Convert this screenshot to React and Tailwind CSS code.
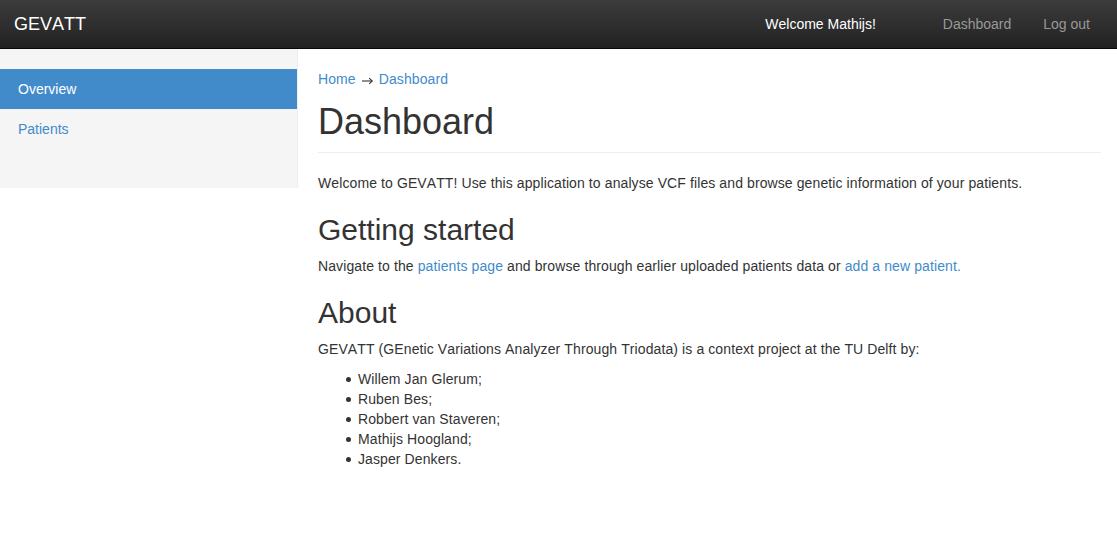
import React from "react";

const members = [
  "Willem Jan Glerum;",
  "Ruben Bes;",
  "Robbert van Staveren;",
  "Mathijs Hoogland;",
  "Jasper Denkers.",
];

function Navbar() {
  return (
    <div className="flex h-[49px] items-center justify-between border-b border-[#080808] bg-gradient-to-b from-[#3c3c3c] to-[#222] pl-[14px] pr-[12px]">
      <a href="#" className="text-[18px] leading-[20px] text-white">
        GEVATT
      </a>
      <div className="flex items-center text-[14px] leading-[20px]">
        <span className="mr-[52px] text-white">Welcome Mathijs!</span>
        <a href="#" className="pl-[15px] pr-[17px] text-[#999]">
          Dashboard
        </a>
        <a href="#" className="px-[15px] text-[#999]">
          Log out
        </a>
      </div>
    </div>
  );
}

function Sidebar() {
  return (
    <div className="w-[298px] shrink-0 self-start border-r border-[#eee] bg-[#f5f5f5] pt-[20px] pb-[39px]">
      <a href="#" className="block bg-[#428bca] px-[18px] py-[10px] text-white">
        Overview
      </a>
      <a href="#" className="block px-[18px] py-[10px] text-[#428bca]">
        Patients
      </a>
    </div>
  );
}

function Arrow() {
  return (
    <svg width="11" height="8" viewBox="0 0 11 8" className="mx-[6px] mt-[3px]" fill="none" stroke="#333" strokeWidth="1.1">
      <path d="M0 4H10.2" />
      <path d="M7.2 1.2L10.3 4L7.2 6.8" />
    </svg>
  );
}

export default function App() {
  return (
    <div
      className="min-h-screen bg-white text-[14px] leading-[20px] text-[#333] [font-kerning:none]"
      style={{ fontFamily: '"Liberation Sans", Arial, sans-serif' }}
    >
      <Navbar />
      <div className="flex">
        <Sidebar />
        <main className="flex-1 pt-[20px] pl-[20px] pr-[16px] tracking-[0.1px]">
          <div className="flex items-center">
            <a href="#" className="text-[#428bca]">Home</a>
            <Arrow />
            <a href="#" className="text-[#428bca]">Dashboard</a>
          </div>
          <div className="mt-[13px] mb-[20px] border-b border-[#eee] pb-[10px] tracking-normal">
            <h1 className="text-[36px] leading-[40px] font-normal">Dashboard</h1>
          </div>
          <p className="mb-[10px]">
            Welcome to GEVATT! Use this application to analyse VCF files and browse genetic information of your patients.
          </p>
          <h2 className="mt-[20px] mb-[10px] text-[30px] leading-[33px] font-normal tracking-normal">Getting started</h2>
          <p className="mb-[10px]">
            Navigate to the{" "}
            <a href="#" className="text-[#428bca]">patients page</a> and browse through earlier uploaded patients data or{" "}
            <a href="#" className="text-[#428bca]">add a new patient.</a>
          </p>
          <h2 className="mt-[20px] mb-[10px] text-[30px] leading-[33px] font-normal tracking-normal">About</h2>
          <p className="mb-[10px]">
            GEVATT (GEnetic Variations Analyzer Through Triodata) is a context project at the TU Delft by:
          </p>
          <ul className="mb-[10px] pl-[28px]">
            {members.map((m) => (
              <li key={m} className="flex items-center gap-[7px]">
                <span className="h-[5px] w-[5px] shrink-0 rounded-full bg-[#333]" />
                <span>{m}</span>
              </li>
            ))}
          </ul>
        </main>
      </div>
    </div>
  );
}
